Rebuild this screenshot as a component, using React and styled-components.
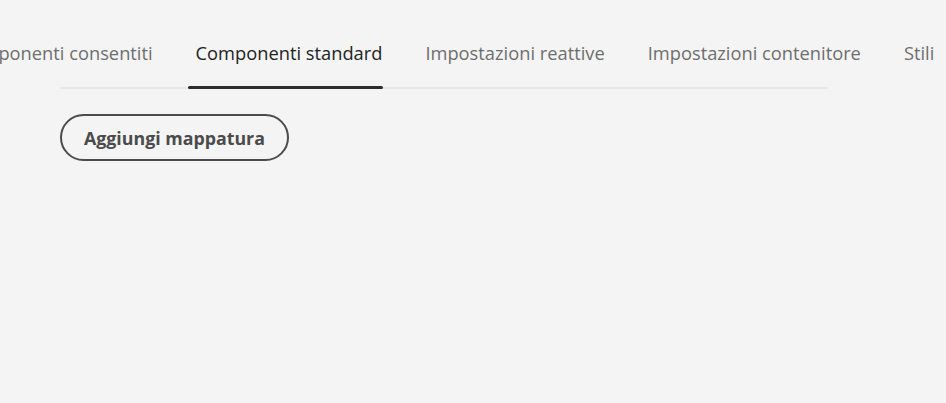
import React, { useState } from "react"
import styled, { createGlobalStyle } from "styled-components"

const GlobalStyle = createGlobalStyle`
  html, body {
    margin: 0;
    padding: 0;
    background: #f4f4f4;
  }
  body {
    font-family: "Open Sans", "Noto Sans", sans-serif;
    overflow: hidden;
  }
`

const Page = styled.div`
  width: 946px;
  height: 403px;
  overflow: hidden;
  background: #f4f4f4;
`

const TabBar = styled.nav`
  margin: 0 0 0 60px;
  width: 768px;
  padding-top: 20px;
  border-bottom: 2px solid #e8e8e8;
  position: relative;
`

const TabList = styled.ul`
  list-style: none;
  margin: 0 0 0 -101px;
  padding: 0;
  display: flex;
  gap: 43px;
  white-space: nowrap;
`

const Tab = styled.li`
  position: relative;
  height: 67px;
  display: flex;
  align-items: center;
  padding-bottom: 2px;
  box-sizing: border-box;
  font-size: 18.3px;
  color: ${props => (props.selected ? "#222222" : "#6e6e6e")};
  cursor: pointer;

  &::after {
    content: "";
    display: ${props => (props.selected ? "block" : "none")};
    position: absolute;
    left: -8px;
    right: -1px;
    bottom: -2px;
    height: 3px;
    border-radius: 2px;
    background: #2c2c2c;
  }
`

const Content = styled.div`
  padding: 25px 60px;
`

const OutlineButton = styled.button`
  height: 47px;
  padding: 0 22px;
  border: 2px solid #4b4b4b;
  border-radius: 24px;
  background: transparent;
  color: #4b4b4b;
  font-family: "Open Sans", "Noto Sans", sans-serif;
  font-size: 17.8px;
  font-weight: 700;
  cursor: pointer;
`

const tabs = [
  "Componenti consentiti",
  "Componenti standard",
  "Impostazioni reattive",
  "Impostazioni contenitore",
  "Stili",
]

const App = () => {
  const [active, setActive] = useState(1)
  return (
    <Page>
      <GlobalStyle />
      <TabBar>
        <TabList>
          {tabs.map((label, i) => (
            <Tab key={label} selected={i === active} onClick={() => setActive(i)}>
              {label}
            </Tab>
          ))}
        </TabList>
      </TabBar>
      <Content>
        <OutlineButton>Aggiungi mappatura</OutlineButton>
      </Content>
    </Page>
  )
}

export default App
